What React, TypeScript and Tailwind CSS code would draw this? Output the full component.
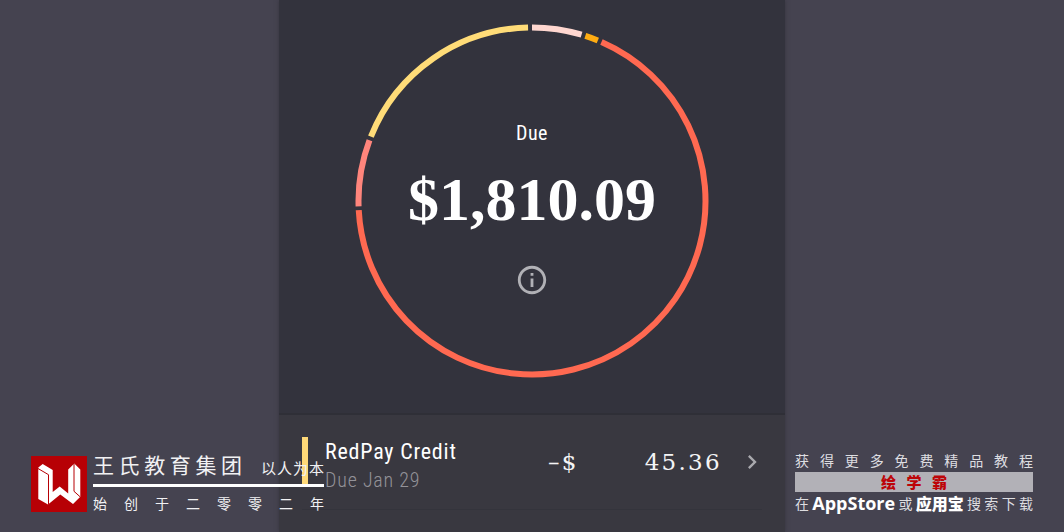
import clsx from 'clsx';
import { MdChevronRight, MdInfoOutline } from 'react-icons/md';

interface Segment {
  color: string;
  from: number;
  to: number;
}

// angles in degrees, clockwise from the top
const segments: Segment[] = [
  { color: '#ffd7d0', from: 0, to: 16.6 },
  { color: '#ffac12', from: 17.9, to: 22.3 },
  { color: '#ff6951', from: 23.6, to: 267 },
  { color: '#ff857c', from: 268.2, to: 290.5 },
  { color: '#ffdc78', from: 291.8, to: 358.7 },
];

const CENTER = 177;
const RADIUS = 173.5;

const point = (angle: number) => {
  const rad = (angle * Math.PI) / 180;
  return `${CENTER + RADIUS * Math.sin(rad)} ${CENTER - RADIUS * Math.cos(rad)}`;
};

const arc = ({ from, to }: Segment) =>
  `M${point(from)}A${RADIUS} ${RADIUS} 0 ${to - from > 180 ? 1 : 0} 1 ${point(to)}`;

const bills = [{ name: 'RedPay Credit', due: 'Due Jan 29', amount: '45.36', bar: 'bg-[#ffd978]' }];

const condensed = "font-['Roboto_Condensed','Liberation_Sans_Narrow',Roboto,sans-serif]";

function DueRing() {
  return (
    <section className="grid place-items-center pt-6 pb-[35px]">
      <svg viewBox="0 0 354 354" className="col-start-1 row-start-1 w-full max-w-[354px]" fill="none" strokeWidth="6">
        {segments.map((segment) => (
          <path key={segment.color} d={arc(segment)} stroke={segment.color} />
        ))}
      </svg>
      <div className="col-start-1 row-start-1 flex flex-col items-center pt-4">
        <p className={clsx(condensed, 'text-[20px] leading-6 tracking-wide')}>Due</p>
        <p className="mt-[22px] font-['Liberation_Serif',serif] text-[62px] leading-[64px] font-bold">$1,810.09</p>
        <button type="button" aria-label="About this amount" className="mt-8 text-[#b1b1b6]">
          <MdInfoOutline size={34} />
        </button>
      </div>
    </section>
  );
}

function BillList() {
  return (
    <ul className="grow border-t-2 border-[#2f2f37] bg-[#393840] px-[23px]">
      {bills.map((bill) => (
        <li key={bill.name} className="border-b border-[#34343c]">
          <button type="button" className="flex w-full items-center py-[15px] text-left">
            <span className={clsx('h-[50px] w-[6px]', bill.bar)} />
            <span className={clsx(condensed, 'ml-[17px] flex grow flex-col pt-2 tracking-wider')}>
              <span className="text-[22px] leading-7">{bill.name}</span>
              <span className="text-[20px] leading-7 font-light text-[#939298]">{bill.due}</span>
            </span>
            <span className="flex w-[174px] justify-between font-['DejaVu_Serif',serif] text-[23px] leading-8 tracking-widest text-[#f4f4f5]">
              <span>–$</span>
              <span>{bill.amount}</span>
            </span>
            <MdChevronRight size={28} className="ml-4 -mr-1 text-[#a9a9ae]" />
          </button>
        </li>
      ))}
    </ul>
  );
}

function SchoolMark() {
  return (
    <div className="flex items-center gap-[6px] text-[#f1f1f3]">
      <svg viewBox="0 0 56 56" className="size-14">
        <path fill="#b70005" d="M0 0h56v56H0z" />
        <path
          fill="#fff"
          d="M7.3 11.5l4.4-3.5 10 6v22l7-5.5 8.5 7V13.5L43.3 7.5l6 6v27.2L42 48 29.3 38.5 17 48.5 7.3 43z"
        />
        <path fill="none" stroke="#b70005" d="M7 12.5l10.5 6.2V48.5M43 7.5v27.8l6 5.4" />
      </svg>
      <div className="flex w-[231px] flex-col">
        <div className="flex items-start justify-between">
          <span className="w-[149px] text-[21px] leading-6 [text-align-last:justify]">王氏教育集团</span>
          <span className="w-[63px] pt-1 text-[15px] leading-6 [text-align-last:justify]">以人为本</span>
        </div>
        <div className="mt-1 h-[3px] bg-white" />
        <span className="mt-1 text-[14px] leading-6 [text-align-last:justify]">始创于二零零二年</span>
      </div>
    </div>
  );
}

function AppMark() {
  return (
    <div className="flex w-[238px] flex-col pb-px text-[14px] text-[#dedee1]">
      <span className="leading-6 [text-align-last:justify]">获得更多免费精品教程</span>
      <div className="flex h-5 items-center justify-center bg-[#b2b1b7]">
        <span className="w-[66px] text-[15px] leading-5 font-black text-[#bd0508] [text-align-last:justify]">绘学霸</span>
      </div>
      <div className="flex items-center justify-between leading-[22px]">
        <span>在</span>
        <span className="font-['Open_Sans',sans-serif] text-[18px] font-bold text-white">AppStore</span>
        <span>或</span>
        <span className="text-[16px] font-black text-white">应用宝</span>
        <span className="w-[66px] [text-align-last:justify]">搜索下载</span>
      </div>
    </div>
  );
}

export default function App() {
  return (
    <div className="relative flex min-h-screen justify-center bg-[#454350] text-white">
      <main className="flex w-full max-w-[506px] flex-col bg-[#33333d] shadow-[0_0_4px_#36353f]">
        <DueRing />
        <BillList />
      </main>
      <footer className="absolute inset-x-0 bottom-0 flex items-end justify-between px-[31px] pb-[17px] font-['Noto_Sans_CJK_SC',sans-serif]">
        <SchoolMark />
        <AppMark />
      </footer>
    </div>
  );
}
